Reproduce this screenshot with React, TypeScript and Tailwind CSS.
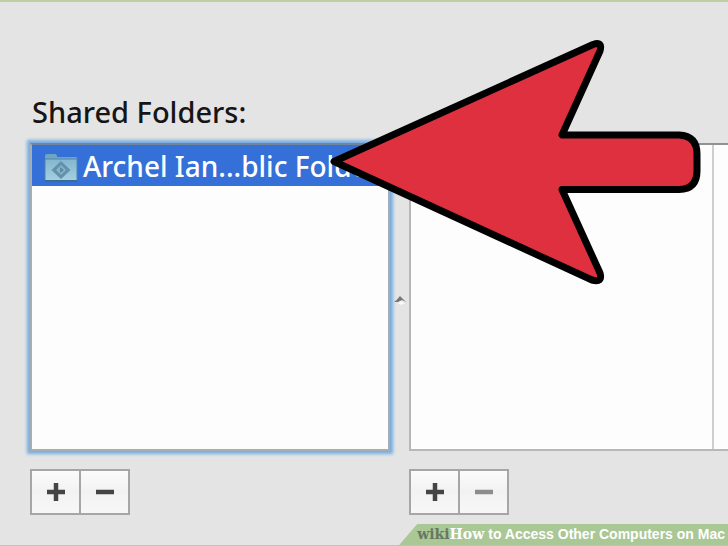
interface EditButtonsProps {
  label: string;
  canRemove?: boolean;
}

function EditButtons({ label, canRemove = true }: EditButtonsProps) {
  return (
    <div className="mt-[18px] inline-flex h-[46px] w-[100px] divide-x-2 divide-[#a6a6a6] border-2 border-[#a6a6a6] bg-linear-to-b from-[#fbfbfb] via-[#f2f2f2] to-[#f7f7f7]">
      <button aria-label={`Add ${label}`} className="flex flex-1 items-center justify-center">
        <svg className="size-5" viewBox="0 0 20 20" stroke="#444" strokeWidth="4.500">
          <path d="M1 10h18M10 1v18" />
        </svg>
      </button>
      <button
        aria-label={`Remove ${label}`}
        disabled={!canRemove}
        className="flex flex-1 items-center justify-center text-[#444] disabled:text-[#8c8c8c]"
      >
        <svg className="size-5" viewBox="0 0 20 20" stroke="currentColor" strokeWidth="4.500">
          <path d="M1 10h18" />
        </svg>
      </button>
    </div>
  );
}

function PublicFolderIcon() {
  return (
    <svg className="h-8 w-9 shrink-0" viewBox="0 -2 36 32">
      <defs>
        <linearGradient id="folder" x1="0" y1="0" x2="0" y2="1">
          <stop offset="0" stopColor="#84b6cf" />
          <stop offset="1" stopColor="#a5d0e0" />
        </linearGradient>
      </defs>
      <path d="M2 7V4q0-2 2-2h8q2 0 2 2v1h19q1 0 1 1v2H2z" fill="#6fa5c0" />
      <path d="M2 7h32v21q0 1-1 1H3q-1 0-1-1z" fill="url(#folder)" stroke="#4d87ad" />
      <path d="M2 29h32" stroke="#386c96" strokeWidth="2" />
      <path d="M18 9l9.500 9-9.500 9-9.500-9z" fill="#6391ac" />
      <path d="M18 13l5 5-5 5-5-5z" fill="#86b3ca" />
      <path d="M17 15l4 3-4 3z" fill="#5b8aa6" />
    </svg>
  );
}

function PointerArrow() {
  return (
    <svg
      className="pointer-events-none absolute top-[34px] left-[328px] h-[252px] w-[376px]"
      viewBox="328 36 376 252"
      aria-hidden="true"
    >
      <path
        d="M334 161.500L593 44.500Q603 41 600 51L562 135H679Q697 136 697 154V171Q697 189 679 189.500H562L600 273Q603 283 592 280Z"
        fill="#df3040"
        stroke="#000"
        strokeWidth="7"
        strokeLinejoin="round"
      />
    </svg>
  );
}

export default function App() {
  return (
    <main className="relative flex min-h-screen flex-col overflow-hidden border-t-2 border-b border-t-[#bdd0a5] border-b-[#b2d09c] bg-[#e4e4e4] font-['Noto_Sans',sans-serif]">
      <div className="flex flex-1 pt-[92px] pl-[30px]">
        <section className="w-[360px] shrink-0">
          <h2 className="h-[49px] pl-[2px] text-[29px] leading-9 font-medium text-[#151515]">
            Shared Folders:
          </h2>
          <ul className="h-[308px] border-2 border-[#a5adb5] border-t-[#70869c] bg-[#fdfdfd] shadow-[0_0_3px_3px_#78aee2]">
            <li className="flex h-[41px] items-center gap-1 overflow-hidden bg-[#3470d8] pl-[11px] text-[28px] leading-9 font-medium whitespace-nowrap text-white">
              <PublicFolderIcon />
              <span>Archel Ian...blic Folder</span>
            </li>
          </ul>
          <EditButtons label="shared folder" />
        </section>

        <div className="flex w-[19px] shrink-0 justify-center pt-[200px]">
          <svg className="h-3 w-3" viewBox="0 0 12 12" aria-hidden="true">
            <path d="M0 8q3-2 6-6 3 3 6 6l-4-2-4 2z" fill="#777" />
            <path d="M4 9l3-2 4 2-4 2z" fill="#fafafa" />
          </svg>
        </div>

        <section className="min-w-0 flex-1 pt-[49px]">
          <div className="flex h-[308px] border-2 border-r-0 border-[#b7b7b7] border-t-[#919191] bg-[#fdfdfd]">
            <div className="flex-1 border-r-2 border-[#cfcfcf]" />
            <div className="w-[14px]" />
          </div>
          <EditButtons label="user" canRemove={false} />
        </section>
      </div>

      <PointerArrow />

      <footer className="absolute right-0 bottom-0 flex h-[21px] items-center bg-[#aac796] pr-[3px] pl-[18px] font-['Liberation_Sans',sans-serif] text-[14px] font-bold whitespace-nowrap text-white [clip-path:polygon(18px_0,100%_0,100%_100%,0_100%)]">
        <span className="font-['DejaVu_Serif',serif] text-[#68785f]">wiki</span>
        <span className="mr-1 font-['DejaVu_Serif',serif]">How</span>
        <span>to Access Other Computers on Mac</span>
      </footer>
    </main>
  );
}
